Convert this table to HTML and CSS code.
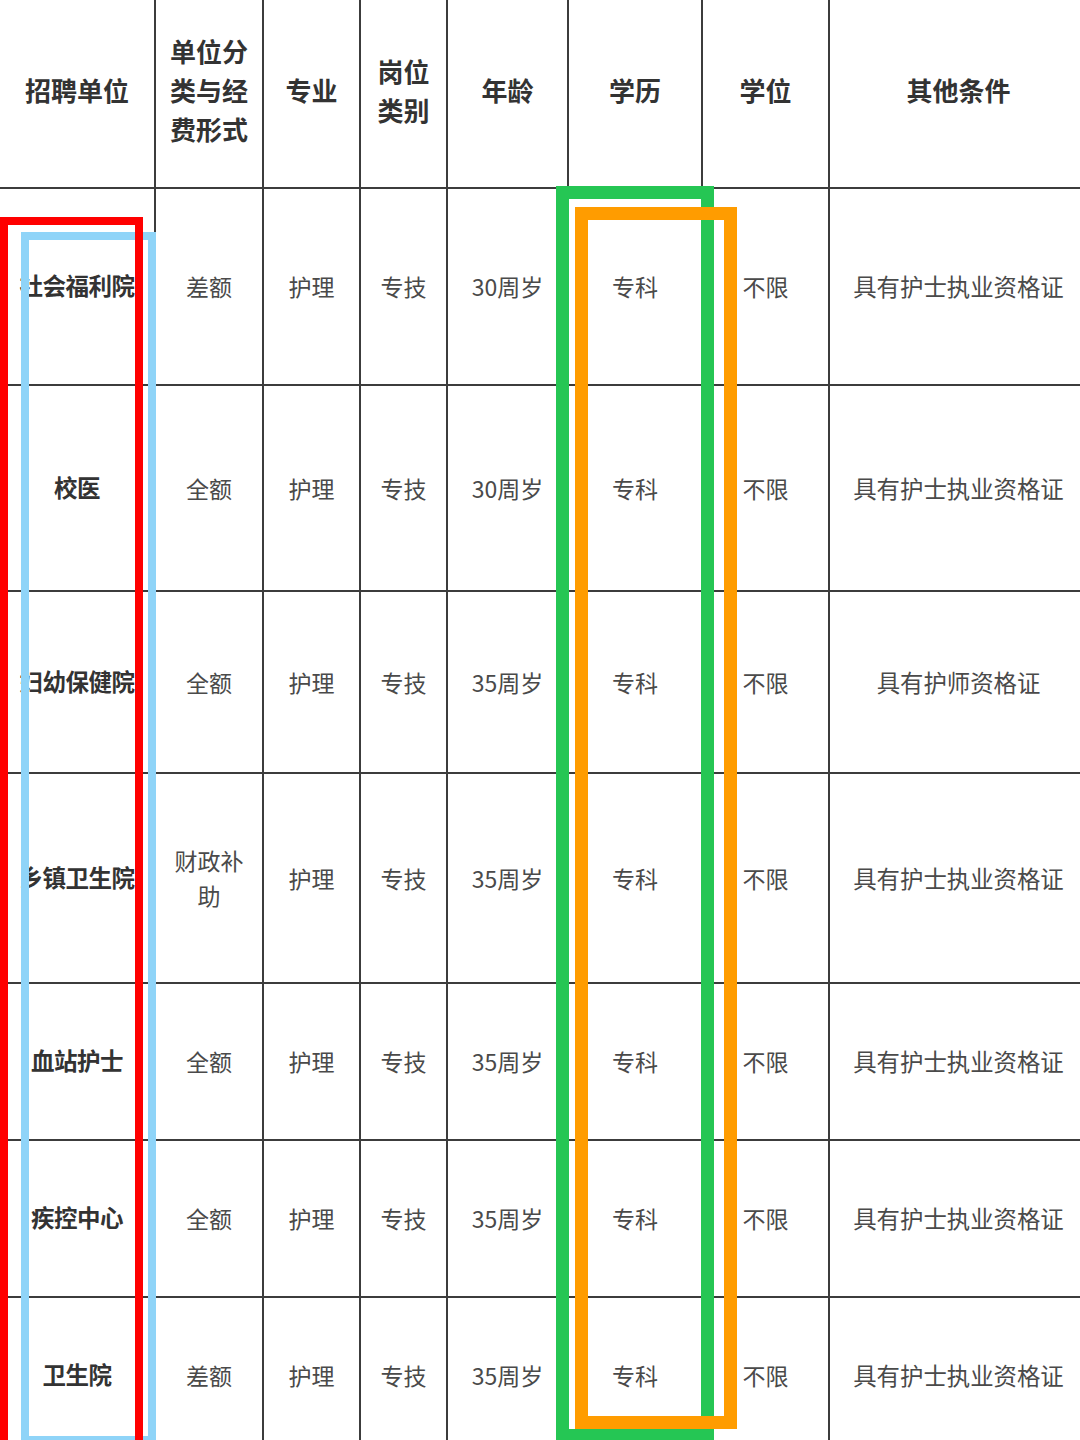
FILE: index.html
```html
<!DOCTYPE html>
<html lang="zh-CN">
<head>
<meta charset="utf-8">
<link rel="stylesheet" href="styles.css">
</head>
<body>
<div class="page">
  <div class="grid">
    <div class="c h">招聘单位</div>
    <div class="c h">单位分<br>类与经<br>费形式</div>
    <div class="c h">专业</div>
    <div class="c h">岗位<br>类别</div>
    <div class="c h">年龄</div>
    <div class="c h">学历</div>
    <div class="c h">学位</div>
    <div class="c h last">其他条件</div>

    <div class="c u">社会福利院</div>
    <div class="c">差额</div><div class="c">护理</div><div class="c">专技</div><div class="c">30周岁</div><div class="c">专科</div><div class="c">不限</div><div class="c last">具有护士执业资格证</div>

    <div class="c u">校医</div>
    <div class="c">全额</div><div class="c">护理</div><div class="c">专技</div><div class="c">30周岁</div><div class="c">专科</div><div class="c">不限</div><div class="c last">具有护士执业资格证</div>

    <div class="c u">妇幼保健院</div>
    <div class="c">全额</div><div class="c">护理</div><div class="c">专技</div><div class="c">35周岁</div><div class="c">专科</div><div class="c">不限</div><div class="c last">具有护师资格证</div>

    <div class="c u">乡镇卫生院</div>
    <div class="c two">财政补<br>助</div><div class="c">护理</div><div class="c">专技</div><div class="c">35周岁</div><div class="c">专科</div><div class="c">不限</div><div class="c last">具有护士执业资格证</div>

    <div class="c u">血站护士</div>
    <div class="c">全额</div><div class="c">护理</div><div class="c">专技</div><div class="c">35周岁</div><div class="c">专科</div><div class="c">不限</div><div class="c last">具有护士执业资格证</div>

    <div class="c u">疾控中心</div>
    <div class="c">全额</div><div class="c">护理</div><div class="c">专技</div><div class="c">35周岁</div><div class="c">专科</div><div class="c">不限</div><div class="c last">具有护士执业资格证</div>

    <div class="c u">卫生院</div>
    <div class="c">差额</div><div class="c">护理</div><div class="c">专技</div><div class="c">35周岁</div><div class="c">专科</div><div class="c">不限</div><div class="c last">具有护士执业资格证</div>
  </div>

  <div class="mark blue"></div>
  <div class="mark red"></div>
  <div class="mark green"></div>
  <div class="mark orange"></div>
</div>
</body>
</html>
```

FILE: styles.css
```css
html, body {
  margin: 0;
  padding: 0;
  background: #ffffff;
}
body {
  font-family: "Noto Sans CJK SC", "Noto Sans", sans-serif;
  overflow: hidden;
}
.page {
  position: relative;
  width: 1080px;
  height: 1440px;
  overflow: hidden;
}
.grid {
  display: grid;
  grid-template-columns: 156px 108px 97px 87px 121px 134px 127px 257px;
  grid-template-rows: 189px 197px 206px 182px 210px 157px 157px 157px;
}
.c {
  box-sizing: border-box;
  display: flex;
  align-items: center;
  justify-content: center;
  text-align: center;
  border-right: 2px solid #3c3c3c;
  border-bottom: 2px solid #3c3c3c;
  font-size: 23px;
  color: #4a4a4a;
  line-height: 35px;
  white-space: nowrap;
}
.c.last {
  border-right: none;
  font-size: 23.4px;
}
.c.h {
  font-size: 26px;
  font-weight: 700;
  color: #333333;
  line-height: 39px;
  padding-bottom: 8px;
}
.c.u {
  font-weight: 700;
  color: #333333;
  font-size: 23.5px;
  letter-spacing: -0.5px;
  padding-bottom: 2px;
}
.mark {
  position: absolute;
  box-sizing: border-box;
}
.red {
  left: 0;
  top: 217px;
  width: 143px;
  height: 1300px;
  border: 8px solid #ff0000;
}
.blue {
  left: 21px;
  top: 232px;
  width: 135px;
  height: 1212px;
  border: 8px solid #8fd4f8;
}
.green {
  left: 556px;
  top: 186px;
  width: 158px;
  height: 1256px;
  border: 13px solid #25c654;
}
.orange {
  left: 575px;
  top: 207px;
  width: 162px;
  height: 1222px;
  border: 13px solid #ff9c00;
}
```
